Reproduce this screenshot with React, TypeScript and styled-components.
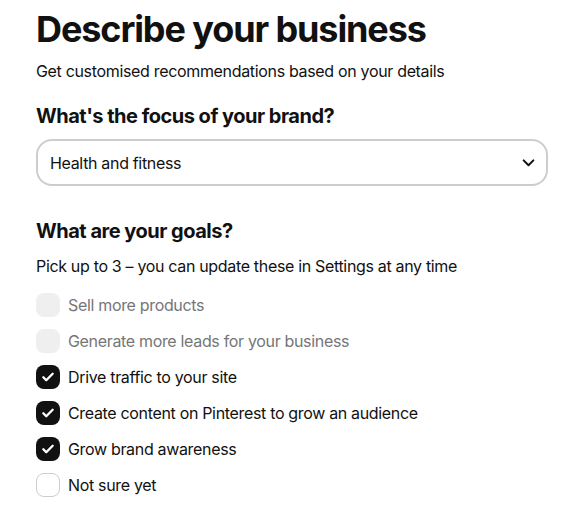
import React, { useState } from "react";
import styled, { createGlobalStyle } from "styled-components";

const Global = createGlobalStyle`
  html, body { margin: 0; padding: 0; background: #fff; }
  body { font-family: Inter, "Noto Sans", sans-serif; color: #111111; -webkit-font-smoothing: antialiased; }
  * { box-sizing: border-box; }
`;

const Page = styled.div`
  padding: 5px 40px 0 36px;
  width: 588px;
`;

const Title = styled.h1`
  margin: 0;
  font-size: 36px;
  line-height: 48px;
  font-weight: 700;
  letter-spacing: -1.1px;
`;

const Subtitle = styled.p`
  margin: 7px 0 0;
  font-size: 16px;
  line-height: 22px;
  letter-spacing: -0.33px;
`;

const SectionTitle = styled.h2`
  margin: ${(p: { $top: number }) => p.$top}px 0 0;
  font-size: 20px;
  line-height: 26px;
  font-weight: 700;
  letter-spacing: -0.5px;
`;

const Select = styled.div`
  margin-top: 10px;
  height: 47px;
  border: 2px solid #cdcdcd;
  border-radius: 16px;
  display: flex;
  align-items: center;
  justify-content: space-between;
  padding: 0 11px 0 12px;
  font-size: 16px;
  letter-spacing: -0.33px;
`;

const Hint = styled.p`
  margin: 11px 0 0;
  font-size: 16px;
  line-height: 22px;
  letter-spacing: -0.33px;
`;

const List = styled.div`
  margin-top: 16px;
  display: flex;
  flex-direction: column;
  gap: 12px;
`;

const Row = styled.label`
  display: flex;
  align-items: center;
  gap: 8px;
  height: 24px;
  font-size: 16px;
  letter-spacing: -0.33px;
  color: ${(p: { $disabled?: boolean }) => (p.$disabled ? "#767676" : "#111111")};
`;

type BoxState = "disabled" | "checked" | "empty";

const Box = styled.span<{ $state: BoxState }>`
  width: 24px;
  height: 24px;
  border-radius: 8px;
  flex: none;
  display: flex;
  align-items: center;
  justify-content: center;
  background: ${(p) => (p.$state === "checked" ? "#111111" : p.$state === "disabled" ? "#efefef" : "#ffffff")};
  border: ${(p) => (p.$state === "empty" ? "1.5px solid #cdcdcd" : "none")};
`;

const Check = () => (
  <svg width="14" height="14" viewBox="0 0 24 24">
    <path d="M4 12.5l5 5L20 6.5" fill="none" stroke="#fff" strokeWidth="4" strokeLinecap="round" strokeLinejoin="round" />
  </svg>
);

const Chevron = () => (
  <svg width="13" height="13" viewBox="0 0 24 24">
    <path d="M3 8l9 9 9-9" fill="none" stroke="#111" strokeWidth="3.6" strokeLinecap="round" strokeLinejoin="round" />
  </svg>
);

const goals: { label: string; state: BoxState }[] = [
  { label: "Sell more products", state: "disabled" },
  { label: "Generate more leads for your business", state: "disabled" },
  { label: "Drive traffic to your site", state: "checked" },
  { label: "Create content on Pinterest to grow an audience", state: "checked" },
  { label: "Grow brand awareness", state: "checked" },
  { label: "Not sure yet", state: "empty" },
];

export default function App() {
  const [items] = useState(goals);
  return (
    <>
      <Global />
      <Page>
        <Title>Describe your business</Title>
        <Subtitle>Get customised recommendations based on your details</Subtitle>
        <SectionTitle $top={21}>What's the focus of your brand?</SectionTitle>
        <Select>
          <span>Health and fitness</span>
          <Chevron />
        </Select>
        <SectionTitle $top={32}>What are your goals?</SectionTitle>
        <Hint>Pick up to 3 – you can update these in Settings at any time</Hint>
        <List>
          {items.map((g) => (
            <Row key={g.label} $disabled={g.state === "disabled"}>
              <Box $state={g.state}>{g.state === "checked" && <Check />}</Box>
              {g.label}
            </Row>
          ))}
        </List>
      </Page>
    </>
  );
}
